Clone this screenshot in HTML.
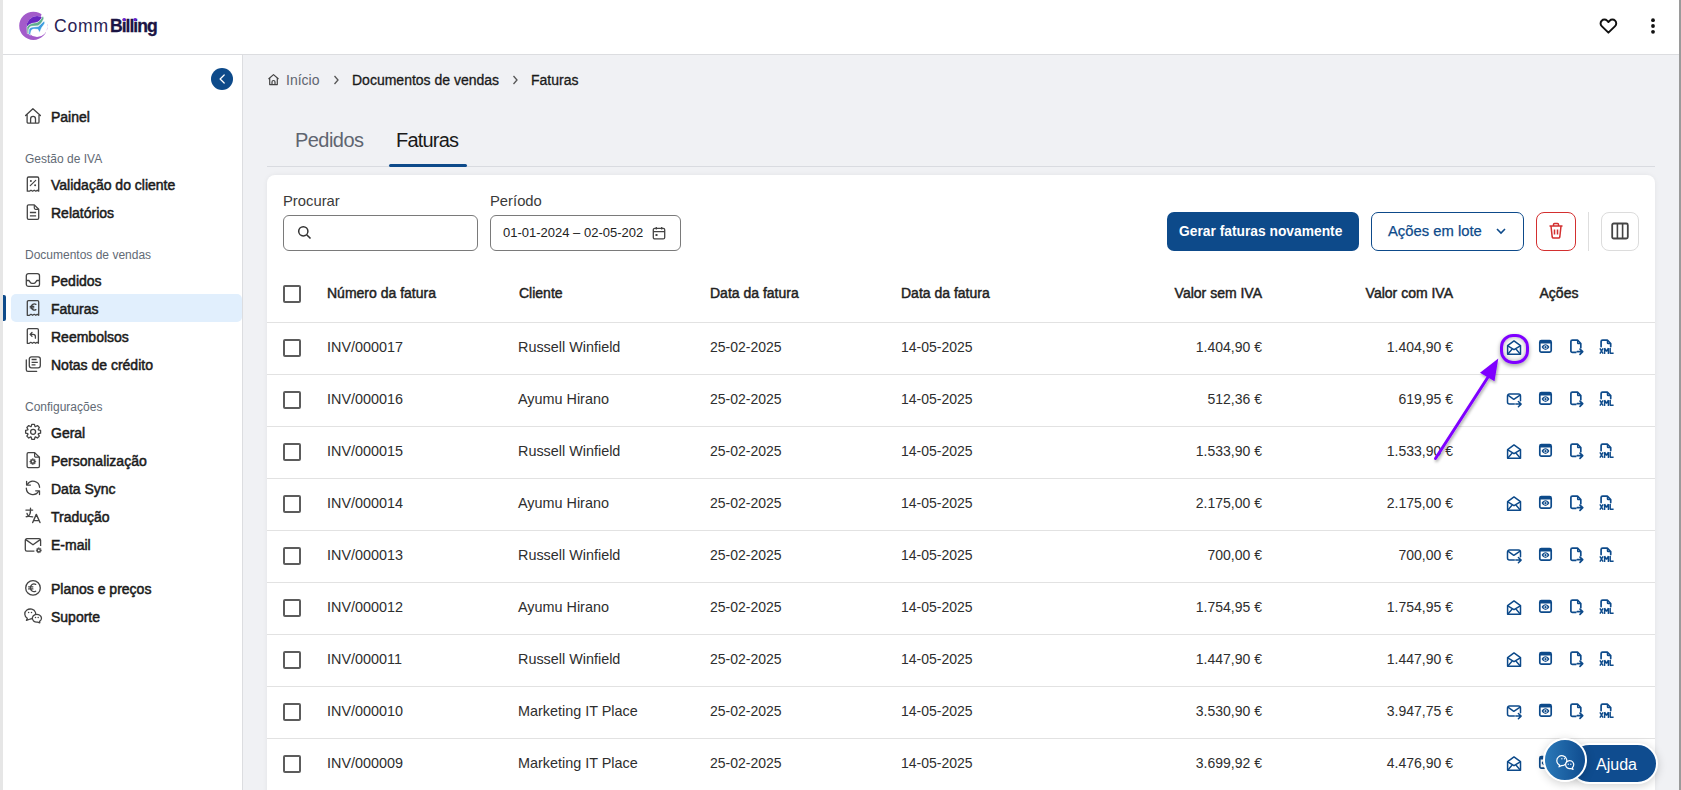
<!DOCTYPE html>
<html><head><meta charset="utf-8">
<style>
*{box-sizing:border-box;margin:0;padding:0}
html,body{width:1681px;height:790px;overflow:hidden;background:#f0f1f4;font-family:"Liberation Sans",sans-serif;color:#1f1f1f;position:relative}
.abs{position:absolute}
svg{overflow:visible}
#lb{position:absolute;left:0;top:0;width:3px;height:790px;background:#e6e6e6}
#rb{position:absolute;left:1679px;top:0;width:2px;height:790px;background:#9a9a9a}
#hdr{position:absolute;left:3px;top:0;width:1676px;height:55px;background:#fff;border-bottom:1px solid #dcdde0}
#side{position:absolute;left:3px;top:55px;width:240px;height:735px;background:#fff;border-right:1px solid #dcdde0}
.t{position:absolute;white-space:nowrap;line-height:20px;height:20px}
.si{left:51px;font-size:14px;font-weight:400;color:#1b1b1b;-webkit-text-stroke:0.5px #1b1b1b}
.sh{left:25px;font-size:12px;color:#626a75}
.card{position:absolute;left:267px;top:175px;width:1388px;height:640px;background:#fff;border-radius:8px;box-shadow:0 0 5px rgba(0,0,0,.06)}
.th{font-size:14px;font-weight:400;color:#222;-webkit-text-stroke:0.45px #222}
.td{font-size:14px;color:#2e2e2e}
.rline{position:absolute;left:267px;width:1388px;height:1px;background:#e2e2e2}
.cb{position:absolute;left:283px;width:18px;height:18px;border:2px solid #5c5c5c;border-radius:2px}
.btn{position:absolute;border-radius:7px}
</style></head><body>
<div id="hdr"></div>
<div id="side"></div>

<svg class="abs" style="left:14px;top:6px" width="40" height="40" viewBox="0 0 790 790">
<defs><clipPath id="inner"><circle cx="455" cy="405" r="206"/></clipPath></defs>
<path fill-rule="evenodd" fill="#a35bca" d="M103,392a280,280 0 1,0 560,0a280,280 0 1,0 -560,0ZM249,405a206,206 0 1,0 412,0a206,206 0 1,0 -412,0Z"/>
<path fill="#fff" d="M530,205 L580,60 L800,60 L800,365 L668,372 Z"/>
<g clip-path="url(#inner)">
<path fill="#6a26c1" d="M230,640 L255,425 C265,395 280,378 300,368 C340,345 390,335 430,330 C490,322 530,270 558,212 L590,100 L200,100 Z"/>
</g>
<path fill="#5fae8e" stroke="#fff" stroke-width="10" d="M560,210 C535,262 490,325 430,330 C390,335 340,345 300,368 C278,380 262,400 255,425 L262,545 L292,548 L294,450 C305,420 325,405 345,400 L470,392 C520,380 560,310 585,258 C595,232 580,198 560,210 Z"/>
<path fill="#3f9ee0" stroke="#fff" stroke-width="10" d="M592,300 L480,405 L352,418 C325,428 305,440 298,460 L292,550 L320,580 L340,482 C360,462 380,456 400,455 L470,460 L505,522 L545,432 L602,352 C612,330 605,300 592,300 Z"/>
</svg>
<div class="t" style="left:54px;top:15px;font-size:17.6px;color:#2a2355;height:22px;line-height:22px;letter-spacing:0.75px">Comm</div>
<div class="t" style="left:110px;top:15px;font-size:17.6px;font-weight:700;color:#1b1444;height:22px;line-height:22px;letter-spacing:-1px;-webkit-text-stroke:0.3px #1b1444">Billing</div>
<svg class="abs" style="left:120px;top:16px" width="20" height="6" viewBox="0 0 20 6" ><circle cx="4.2" cy="3.6" r="1.7" fill="#6a1fd0"/><circle cx="15.1" cy="3.6" r="1.7" fill="#6a1fd0"/></svg>
<svg class="abs" style="left:1599px;top:17px" width="19" height="17" viewBox="0 0 19 17" ><path transform="translate(9.4 9.2) scale(1.08) translate(-9.4 -9.2)" d="M9.4 15.2 3.2 9.1a3.5 3.5 0 0 1 0-5 3.5 3.5 0 0 1 5 0l1.2 1.2 1.2-1.2a3.5 3.5 0 0 1 5 0 3.5 3.5 0 0 1 0 5z" fill="none" stroke="#111" stroke-width="1.8" stroke-linejoin="round"/></svg>
<svg class="abs" style="left:1650px;top:17px" width="6" height="18" viewBox="0 0 6 18" ><circle cx="3" cy="3.2" r="1.9" fill="#111"/><circle cx="3" cy="9" r="1.9" fill="#111"/><circle cx="3" cy="14.8" r="1.9" fill="#111"/></svg>
<div class="abs" style="left:211px;top:68px;width:22px;height:22px;border-radius:50%;background:#0d4a8a"></div>
<svg class="abs" style="left:211px;top:68px" width="22" height="22" viewBox="0 0 22 22" ><path d="M13.2 7 9.1 11l4.1 4" fill="none" stroke="#fff" stroke-width="1.25" stroke-linecap="round" stroke-linejoin="round"/></svg>
<div class="abs" style="left:11px;top:294px;width:231px;height:28px;background:#e1effd;border-radius:5px"></div>
<div class="abs" style="left:3px;top:295px;width:3px;height:26px;background:#0d4a8a;border-radius:0 2px 2px 0"></div>
<div class="t si" style="top:106.5px">Painel</div>
<svg class="abs" style="left:25px;top:108px" width="18" height="17" viewBox="0 0 18 17" ><path d="M0.6 7.6 7.9 0.8 15.4 7.6M2.1 6.3v7.6a1.2 1.2 0 0 0 1.2 1.2h9.5a1.2 1.2 0 0 0 1.2-1.2V6.3M5.6 15.1v-4.2a2.45 2.45 0 0 1 4.9 0v4.2" fill="none" stroke="#444" stroke-width="1.3" stroke-linejoin="round" stroke-linecap="round"/></svg>
<div class="t sh" style="top:149px">Gestão de IVA</div>
<div class="t si" style="top:174.5px">Validação do cliente</div>
<svg class="abs" style="left:25px;top:176px" width="18" height="17" viewBox="0 0 18 17" ><path d="M2.3 15.2V2.3a1.3 1.3 0 0 1 1.3-1.3h8.8a1.3 1.3 0 0 1 1.3 1.3v12.9l-1.4-1-1.5 1-1.6-1-1.6 1-1.6-1-1.5 1z" fill="none" stroke="#444" stroke-width="1.3" stroke-linejoin="round"/><path d="M5.3 9.7 10.7 4.3" stroke="#444" stroke-width="1.2" stroke-linecap="round"/><circle cx="5.9" cy="4.9" r="1" fill="#444"/><circle cx="10.1" cy="9.2" r="1" fill="#444"/></svg>
<div class="t si" style="top:202.5px">Relatórios</div>
<svg class="abs" style="left:25px;top:204px" width="18" height="17" viewBox="0 0 18 17" ><path d="M9.3 0.9H3.6a1.3 1.3 0 0 0-1.3 1.3v11.8a1.3 1.3 0 0 0 1.3 1.3h8.8a1.3 1.3 0 0 0 1.3-1.3V5.3z" fill="none" stroke="#444" stroke-width="1.3" stroke-linejoin="round"/><path d="M9.3 0.9v3.2a1.2 1.2 0 0 0 1.2 1.2h3.2" fill="none" stroke="#444" stroke-width="1.2"/><path d="M4.9 8.5h6.2M4.9 11.8h6.2" fill="none" stroke="#444" stroke-width="1.3"/></svg>
<div class="t sh" style="top:245px">Documentos de vendas</div>
<div class="t si" style="top:270.5px">Pedidos</div>
<svg class="abs" style="left:25px;top:272px" width="18" height="17" viewBox="0 0 18 17" ><rect x="1.3" y="1.6" width="13.2" height="12.8" rx="2.2" fill="none" stroke="#444" stroke-width="1.3"/><path d="M1.3 8.5h2.6l1.4 1.9c.4.6 1 .9 1.7.9h1.8c.7 0 1.3-.3 1.7-.9l1.4-1.9h2.6" fill="none" stroke="#444" stroke-width="1.3" stroke-linejoin="round"/></svg>
<div class="t si" style="top:298.5px">Faturas</div>
<svg class="abs" style="left:25px;top:300px" width="18" height="17" viewBox="0 0 18 17" ><path d="M2.3 15.3V1.9a1.2 1.2 0 0 1 1.2-1.2h9a1.2 1.2 0 0 1 1.2 1.2v13.4l-1.4-1-1.5 1-1.6-1-1.6 1-1.6-1-1.5 1z" fill="none" stroke="#444" stroke-width="1.3" stroke-linejoin="round"/><path d="M10.9 4.4a3 3 0 0 0-4.6 2.6 3 3 0 0 0 4.6 2.6M5.2 6.3h3.6M5.2 7.8h3.6" fill="none" stroke="#444" stroke-width="1.3" stroke-linecap="round"/></svg>
<div class="t si" style="top:326.5px">Reembolsos</div>
<svg class="abs" style="left:25px;top:328px" width="18" height="17" viewBox="0 0 18 17" ><path d="M2.3 15.3V1.9a1.2 1.2 0 0 1 1.2-1.2h8.7a1.2 1.2 0 0 1 1.2 1.2v13.4l-1.3-1-1.5 1-1.6-1-1.6 1-1.6-1-1.5 1z" fill="none" stroke="#444" stroke-width="1.3" stroke-linejoin="round"/><path d="M7 4.5 5.1 6.4 7 8.3M5.3 6.4h2.9a2.2 2.2 0 0 1 2.2 2.2v1.6" fill="none" stroke="#444" stroke-width="1.3" stroke-linejoin="round" stroke-linecap="round"/></svg>
<div class="t si" style="top:354.5px">Notas de crédito</div>
<svg class="abs" style="left:25px;top:356px" width="18" height="17" viewBox="0 0 18 17" ><rect x="4.3" y="0.8" width="11" height="11" rx="2.2" fill="none" stroke="#444" stroke-width="1.3"/><path d="M1.3 4v9.7a1.6 1.6 0 0 0 1.6 1.6h8.8" fill="none" stroke="#444" stroke-width="1.3" stroke-linecap="round"/><path d="M6.6 3.5h5M6.6 6.3h6.2M6.6 8.9h3.9" fill="none" stroke="#444" stroke-width="1.3"/></svg>
<div class="t sh" style="top:397px">Configurações</div>
<div class="t si" style="top:422.5px">Geral</div>
<svg class="abs" style="left:25px;top:424px" width="18" height="17" viewBox="0 0 18 17" ><circle cx="8.1" cy="7.8" r="2.5" fill="none" stroke="#444" stroke-width="1.3"/><path d="M6.76 0.32 L9.44 0.32 L10.04 2.55 L10.44 2.71 L12.45 1.56 L14.34 3.45 L13.19 5.46 L13.35 5.86 L15.58 6.46 L15.58 9.14 L13.35 9.74 L13.19 10.14 L14.34 12.15 L12.45 14.04 L10.44 12.89 L10.04 13.05 L9.44 15.28 L6.76 15.28 L6.16 13.05 L5.76 12.89 L3.75 14.04 L1.86 12.15 L3.01 10.14 L2.85 9.74 L0.62 9.14 L0.62 6.46 L2.85 5.86 L3.01 5.46 L1.86 3.45 L3.75 1.56 L5.76 2.71 L6.16 2.55Z" fill="none" stroke="#444" stroke-width="1.3" stroke-linejoin="round"/></svg>
<div class="t si" style="top:450.5px">Personalização</div>
<svg class="abs" style="left:25px;top:452px" width="18" height="17" viewBox="0 0 18 17" ><path d="M9.6 0.6H3.4a1.3 1.3 0 0 0-1.3 1.3v12.4a1.3 1.3 0 0 0 1.3 1.3h9.7a1.3 1.3 0 0 0 1.3-1.3V5.3z" fill="none" stroke="#444" stroke-width="1.3" stroke-linejoin="round"/><path d="M9.6 0.6v3.4a1.2 1.2 0 0 0 1.2 1.2h3.5" fill="none" stroke="#444" stroke-width="1.2"/><path d="M7.27 6.65 L8.33 6.65 L8.53 7.63 L8.68 7.69 L9.52 7.14 L10.26 7.88 L9.71 8.72 L9.77 8.87 L10.75 9.07 L10.75 10.13 L9.77 10.33 L9.71 10.48 L10.26 11.32 L9.52 12.06 L8.68 11.51 L8.53 11.57 L8.33 12.55 L7.27 12.55 L7.07 11.57 L6.92 11.51 L6.08 12.06 L5.34 11.32 L5.89 10.48 L5.83 10.33 L4.85 10.13 L4.85 9.07 L5.83 8.87 L5.89 8.72 L5.34 7.88 L6.08 7.14 L6.92 7.69 L7.07 7.63Z" fill="#444" stroke="#444" stroke-width=".5" stroke-linejoin="round"/><circle cx="7.8" cy="9.6" r="1" fill="#fff"/></svg>
<div class="t si" style="top:478.5px">Data Sync</div>
<svg class="abs" style="left:25px;top:480px" width="18" height="17" viewBox="0 0 18 17" ><path d="M14.6 7.3A6.6 6.6 0 0 0 2.4 4.3M1.3 8.2a6.6 6.6 0 0 0 12.2 3.3" fill="none" stroke="#444" stroke-width="1.3" stroke-linecap="round"/><path d="M1.6 1.3v3.8h3.8M14.5 14.6v-3.8h-3.8" fill="none" stroke="#444" stroke-width="1.3" stroke-linecap="round" stroke-linejoin="round"/></svg>
<div class="t si" style="top:506.5px">Tradução</div>
<svg class="abs" style="left:25px;top:508px" width="18" height="17" viewBox="0 0 18 17" ><path d="M0.9 2.1h6.8M5.5 0.2v2.2c0 2.8-1 4.9-2.4 5.9-.6.4-1.2.5-1.9.4M2 5.3l.6 1.9M1.2 8.7c2.2-.4 4.3-.3 6.5.1" fill="none" stroke="#444" stroke-width="1.3" stroke-linecap="round" stroke-linejoin="round"/><path d="M7.7 14.5 11.3 6.4 15 14.5M9.2 12.6h4.2" fill="none" stroke="#444" stroke-width="1.4" stroke-linecap="round" stroke-linejoin="round"/></svg>
<div class="t si" style="top:534.5px">E-mail</div>
<svg class="abs" style="left:25px;top:537px" width="18" height="17" viewBox="0 0 18 17" ><path d="M15.6 9V3.3a1.6 1.6 0 0 0-1.6-1.6H1.9A1.6 1.6 0 0 0 .3 3.3v9.3a1.6 1.6 0 0 0 1.6 1.6h7.5" fill="none" stroke="#444" stroke-width="1.3"/><path d="M.8 2.6l7.2 5.2 7.2-5.2" fill="none" stroke="#444" stroke-width="1.3" stroke-linejoin="round"/><path d="M13.34 10.74 L14.26 10.74 L14.42 11.61 L14.55 11.67 L15.29 11.17 L15.93 11.81 L15.43 12.55 L15.49 12.68 L16.36 12.84 L16.36 13.76 L15.49 13.92 L15.43 14.05 L15.93 14.79 L15.29 15.43 L14.55 14.93 L14.42 14.99 L14.26 15.86 L13.34 15.86 L13.18 14.99 L13.05 14.93 L12.31 15.43 L11.67 14.79 L12.17 14.05 L12.11 13.92 L11.24 13.76 L11.24 12.84 L12.11 12.68 L12.17 12.55 L11.67 11.81 L12.31 11.17 L13.05 11.67 L13.18 11.61Z" fill="#444" stroke="#444" stroke-width=".5" stroke-linejoin="round"/><circle cx="13.8" cy="13.3" r=".9" fill="#fff"/></svg>
<div class="t si" style="top:578.5px">Planos e preços</div>
<svg class="abs" style="left:25px;top:580px" width="18" height="17" viewBox="0 0 18 17" ><circle cx="8" cy="7.9" r="7.3" fill="none" stroke="#444" stroke-width="1.3"/><path d="M10.7 4.4a3.6 3.6 0 0 0-5.3 3.4 3.6 3.6 0 0 0 5.3 3.4M3.6 6.8h4.3M3.6 8.9h4.3" fill="none" stroke="#444" stroke-width="1.3" stroke-linecap="round"/></svg>
<div class="t si" style="top:606.5px">Suporte</div>
<svg class="abs" style="left:25px;top:608px" width="18" height="17" viewBox="0 0 18 17" ><path d="M2.3 10.2A5.5 5 0 1 1 5.3 11L1.4 12.4z" fill="none" stroke="#444" stroke-width="1.3" stroke-linejoin="round"/><path d="M14.6 13.4A4.6 3.9 0 1 0 12.6 14.1L14.8 14.9z" fill="#fff" stroke="#444" stroke-width="1.3" stroke-linejoin="round"/><circle cx="3.6" cy="4.6" r=".75" fill="#444"/><circle cx="6.5" cy="4.6" r=".75" fill="#444"/><circle cx="10.5" cy="9.6" r=".75" fill="#444"/><circle cx="13.2" cy="9.6" r=".75" fill="#444"/></svg>
<svg class="abs" style="left:267px;top:73px" width="13" height="13" viewBox="0 0 13 13" ><path d="M1.5 6 6.5 1.6 11.5 6M2.7 5v6.6h7.6V5M5 11.6V9a1.5 1.5 0 0 1 3 0v2.6" fill="none" stroke="#444" stroke-width="1.2" stroke-linejoin="round"/></svg>
<div class="t" style="left:286px;top:70px;font-size:14px;color:#5f6570">Início</div>
<svg class="abs" style="left:332px;top:74px" width="8" height="12" viewBox="0 0 8 12" ><path d="M2.5 2 6 6 2.5 10" fill="none" stroke="#555" stroke-width="1.3"/></svg>
<div class="t" style="left:352px;top:70px;font-size:14px;color:#1a1a1a;-webkit-text-stroke:0.3px #1a1a1a">Documentos de vendas</div>
<svg class="abs" style="left:511px;top:74px" width="8" height="12" viewBox="0 0 8 12" ><path d="M2.5 2 6 6 2.5 10" fill="none" stroke="#555" stroke-width="1.3"/></svg>
<div class="t" style="left:531px;top:70px;font-size:14px;color:#1a1a1a;-webkit-text-stroke:0.3px #1a1a1a">Faturas</div>
<div class="abs" style="left:267px;top:166px;width:1388px;height:1px;background:#d9dbe0"></div>
<div class="abs" style="left:389px;top:164px;width:78px;height:3px;background:#0d4a8a;border-radius:2px"></div>
<div class="t" style="left:295px;top:128px;font-size:20px;letter-spacing:-0.55px;color:#5f6570;height:24px;line-height:24px">Pedidos</div>
<div class="t" style="left:396px;top:128px;font-size:20px;letter-spacing:-0.8px;color:#1a1a1a;height:24px;line-height:24px">Faturas</div>
<div class="card"></div>
<div class="t" style="left:283px;top:191px;font-size:14.8px;color:#3a3a3a">Procurar</div>
<div class="t" style="left:490px;top:191px;font-size:14.8px;color:#3a3a3a">Período</div>
<div class="abs" style="left:283px;top:215px;width:195px;height:36px;border:1px solid #7a7a7a;border-radius:6px"></div>
<svg class="abs" style="left:297px;top:225px" width="15" height="15" viewBox="0 0 15 15" ><circle cx="6.3" cy="6.3" r="4.6" fill="none" stroke="#333" stroke-width="1.5"/><path d="M9.7 9.7 13.5 13.5" stroke="#333" stroke-width="1.6"/></svg>
<div class="abs" style="left:490px;top:215px;width:191px;height:36px;border:1px solid #7a7a7a;border-radius:6px"></div>
<div class="t" style="left:503px;top:223px;font-size:13px;color:#222">01-01-2024 – 02-05-202</div>
<svg class="abs" style="left:652px;top:226px" width="14" height="14" viewBox="0 0 14 14" ><rect x="1.3" y="2.3" width="11.4" height="10.6" rx="1.5" fill="none" stroke="#444" stroke-width="1.3"/><path d="M1.3 5.6h11.4M4.3 1v2.6M9.7 1v2.6" fill="none" stroke="#444" stroke-width="1.3"/><rect x="3.5" y="8" width="2" height="2" fill="#444"/></svg>
<div class="btn" style="left:1167px;top:212px;width:192px;height:39px;background:#0d4a8a"></div>
<div class="t" style="left:1179px;top:222px;font-size:13.8px;font-weight:700;color:#fff">Gerar faturas novamente</div>
<div class="btn" style="left:1371px;top:212px;width:153px;height:39px;border:1px solid #0d4a8a"></div>
<div class="t" style="left:1388px;top:221px;font-size:14.8px;color:#0d4a8a;-webkit-text-stroke:0.25px #0d4a8a">Ações em lote</div>
<svg class="abs" style="left:1494px;top:224px" width="14" height="14" viewBox="0 0 14 14" ><path d="M3 5 7 9 11 5" fill="none" stroke="#0d4a8a" stroke-width="1.6"/></svg>
<div class="btn" style="left:1536px;top:212px;width:40px;height:39px;border:1px solid #d32f2f;border-radius:8px"></div>
<svg class="abs" style="left:1548px;top:222px" width="16" height="18" viewBox="0 0 16 18" ><path d="M1.5 4h13M5.5 4V2.5a1 1 0 0 1 1-1h3a1 1 0 0 1 1 1V4M3 4l1.2 11a1.3 1.3 0 0 0 1.3 1h5a1.3 1.3 0 0 0 1.3-1L13 4M6.5 7.5v5M9.5 7.5v5" fill="none" stroke="#d32f2f" stroke-width="1.5" stroke-linejoin="round"/></svg>
<div class="abs" style="left:1588px;top:212px;width:1px;height:39px;background:#dedede"></div>
<div class="btn" style="left:1601px;top:212px;width:38px;height:39px;border:1px solid #dcdcdc;border-radius:8px"></div>
<svg class="abs" style="left:1611px;top:222px" width="18" height="18" viewBox="0 0 18 18" ><rect x="1.2" y="1.5" width="15.6" height="15" rx="1.5" fill="none" stroke="#444" stroke-width="1.8"/><path d="M6.4 1.5v15M11.6 1.5v15" stroke="#444" stroke-width="1.6"/></svg>
<div class="cb" style="top:285px"></div>
<div class="t th" style="left:327px;top:283px">Número da fatura</div>
<div class="t th" style="left:519px;top:283px">Cliente</div>
<div class="t th" style="left:710px;top:283px">Data da fatura</div>
<div class="t th" style="left:901px;top:283px">Data da fatura</div>
<div class="t th" style="left:962px;width:300px;text-align:right;top:283px">Valor sem IVA</div>
<div class="t th" style="left:1153px;width:300px;text-align:right;top:283px">Valor com IVA</div>
<div class="t th" style="left:1459px;width:200px;text-align:center;top:283px">Ações</div>
<div class="rline" style="top:322px"></div>
<div class="rline" style="top:374px"></div>
<div class="rline" style="top:426px"></div>
<div class="rline" style="top:478px"></div>
<div class="rline" style="top:530px"></div>
<div class="rline" style="top:582px"></div>
<div class="rline" style="top:634px"></div>
<div class="rline" style="top:686px"></div>
<div class="rline" style="top:738px"></div>
<div class="cb" style="top:339px"></div>
<div class="t td" style="left:327px;top:337px;font-size:14.4px">INV/000017</div>
<div class="t td" style="left:518px;top:337px;font-size:14.4px">Russell Winfield</div>
<div class="t td" style="left:710px;top:337px">25-02-2025</div>
<div class="t td" style="left:901px;top:337px">14-05-2025</div>
<div class="t td" style="left:962px;width:300px;text-align:right;top:337px">1.404,90 €</div>
<div class="t td" style="left:1153px;width:300px;text-align:right;top:337px">1.404,90 €</div>
<svg class="abs" style="left:1506px;top:339px" width="16" height="16" viewBox="0 0 16 16" ><path d="M1.6 15.2V6.6L8 1.9l6.5 4.7v8.6z" fill="none" stroke="#0d4a8a" stroke-width="1.5" stroke-linejoin="round"/><path d="M1.8 6.8 8 10.6l6.3-3.8M1.9 15 6.2 10M14.2 15 9.9 10" fill="none" stroke="#0d4a8a" stroke-width="1.4"/></svg>
<svg class="abs" style="left:1539px;top:339px" width="13" height="16" viewBox="0 0 13 16" ><rect x="0.8" y="1.6" width="11.4" height="11.6" rx="1.6" fill="none" stroke="#0d4a8a" stroke-width="1.7"/><path d="M0.8 3.2a1.6 1.6 0 0 1 1.6-1.6h8.2a1.6 1.6 0 0 1 1.6 1.6v1.2H0.8z" fill="#0d4a8a"/><path d="M2.6 8.1c1-1.8 2.4-2.8 3.9-2.8s2.9 1 3.9 2.8c-1 1.8-2.4 2.8-3.9 2.8s-2.9-1-3.9-2.8z" fill="#0d4a8a"/><circle cx="6.5" cy="8.1" r="1.5" fill="none" stroke="#fff" stroke-width=".8"/></svg>
<svg class="abs" style="left:1569px;top:339px" width="15" height="16" viewBox="0 0 15 16" ><path d="M6.7 13.4H3.4a1.5 1.5 0 0 1-1.5-1.5V2.6a1.5 1.5 0 0 1 1.5-1.5h5.1l3.3 3.5v4.1" fill="none" stroke="#0d4a8a" stroke-width="1.7" stroke-linejoin="round" stroke-linecap="round"/><path d="M8.6 1.3v2.6a.8.8 0 0 0 .8.8h2.3" fill="none" stroke="#0d4a8a" stroke-width="1.3"/><path d="M8.2 12.7h5.3M11 10.2l2.7 2.5-2.7 2.6" fill="none" stroke="#0d4a8a" stroke-width="1.7" stroke-linejoin="round" stroke-linecap="round"/></svg>
<svg class="abs" style="left:1599px;top:339px" width="15" height="16" viewBox="0 0 15 16" ><path d="M2.1 7.6V2.6a1.5 1.5 0 0 1 1.5-1.5h4.7l3.4 3.5v3" fill="none" stroke="#0d4a8a" stroke-width="1.7" stroke-linejoin="round" stroke-linecap="round"/><path d="M8.4 1.3v2.6a.8.8 0 0 0 .8.8h2.3" fill="none" stroke="#0d4a8a" stroke-width="1.3"/><path d="M0.9 9.3 4.1 14.6M4.1 9.3 0.9 14.6M5.6 14.9V9.2L7.5 12.4 9.4 9.2V14.9M11.2 9.1V14.2H14.6" fill="none" stroke="#0d4a8a" stroke-width="1.45" stroke-linejoin="bevel" stroke-linecap="butt"/></svg>
<div class="cb" style="top:391px"></div>
<div class="t td" style="left:327px;top:389px;font-size:14.4px">INV/000016</div>
<div class="t td" style="left:518px;top:389px;font-size:14.4px">Ayumu Hirano</div>
<div class="t td" style="left:710px;top:389px">25-02-2025</div>
<div class="t td" style="left:901px;top:389px">14-05-2025</div>
<div class="t td" style="left:962px;width:300px;text-align:right;top:389px">512,36 €</div>
<div class="t td" style="left:1153px;width:300px;text-align:right;top:389px">619,95 €</div>
<svg class="abs" style="left:1506px;top:391px" width="16" height="16" viewBox="0 0 16 16" ><path d="M8.3 13.1H3.5a2 2 0 0 1-2-2V4.9a2 2 0 0 1 2-2h9a2 2 0 0 1 2 2v4.8" fill="none" stroke="#0d4a8a" stroke-width="1.5" stroke-linecap="round"/><path d="M1.9 4.2 7.8 8.3l6.3-4.1" fill="none" stroke="#0d4a8a" stroke-width="1.5" stroke-linejoin="round"/><path d="M9.8 13.1h5M12.4 10.5l2.7 2.6-2.7 2.6" fill="none" stroke="#0d4a8a" stroke-width="1.5" stroke-linejoin="round" stroke-linecap="round"/></svg>
<svg class="abs" style="left:1539px;top:391px" width="13" height="16" viewBox="0 0 13 16" ><rect x="0.8" y="1.6" width="11.4" height="11.6" rx="1.6" fill="none" stroke="#0d4a8a" stroke-width="1.7"/><path d="M0.8 3.2a1.6 1.6 0 0 1 1.6-1.6h8.2a1.6 1.6 0 0 1 1.6 1.6v1.2H0.8z" fill="#0d4a8a"/><path d="M2.6 8.1c1-1.8 2.4-2.8 3.9-2.8s2.9 1 3.9 2.8c-1 1.8-2.4 2.8-3.9 2.8s-2.9-1-3.9-2.8z" fill="#0d4a8a"/><circle cx="6.5" cy="8.1" r="1.5" fill="none" stroke="#fff" stroke-width=".8"/></svg>
<svg class="abs" style="left:1569px;top:391px" width="15" height="16" viewBox="0 0 15 16" ><path d="M6.7 13.4H3.4a1.5 1.5 0 0 1-1.5-1.5V2.6a1.5 1.5 0 0 1 1.5-1.5h5.1l3.3 3.5v4.1" fill="none" stroke="#0d4a8a" stroke-width="1.7" stroke-linejoin="round" stroke-linecap="round"/><path d="M8.6 1.3v2.6a.8.8 0 0 0 .8.8h2.3" fill="none" stroke="#0d4a8a" stroke-width="1.3"/><path d="M8.2 12.7h5.3M11 10.2l2.7 2.5-2.7 2.6" fill="none" stroke="#0d4a8a" stroke-width="1.7" stroke-linejoin="round" stroke-linecap="round"/></svg>
<svg class="abs" style="left:1599px;top:391px" width="15" height="16" viewBox="0 0 15 16" ><path d="M2.1 7.6V2.6a1.5 1.5 0 0 1 1.5-1.5h4.7l3.4 3.5v3" fill="none" stroke="#0d4a8a" stroke-width="1.7" stroke-linejoin="round" stroke-linecap="round"/><path d="M8.4 1.3v2.6a.8.8 0 0 0 .8.8h2.3" fill="none" stroke="#0d4a8a" stroke-width="1.3"/><path d="M0.9 9.3 4.1 14.6M4.1 9.3 0.9 14.6M5.6 14.9V9.2L7.5 12.4 9.4 9.2V14.9M11.2 9.1V14.2H14.6" fill="none" stroke="#0d4a8a" stroke-width="1.45" stroke-linejoin="bevel" stroke-linecap="butt"/></svg>
<div class="cb" style="top:443px"></div>
<div class="t td" style="left:327px;top:441px;font-size:14.4px">INV/000015</div>
<div class="t td" style="left:518px;top:441px;font-size:14.4px">Russell Winfield</div>
<div class="t td" style="left:710px;top:441px">25-02-2025</div>
<div class="t td" style="left:901px;top:441px">14-05-2025</div>
<div class="t td" style="left:962px;width:300px;text-align:right;top:441px">1.533,90 €</div>
<div class="t td" style="left:1153px;width:300px;text-align:right;top:441px">1.533,90 €</div>
<svg class="abs" style="left:1506px;top:443px" width="16" height="16" viewBox="0 0 16 16" ><path d="M1.6 15.2V6.6L8 1.9l6.5 4.7v8.6z" fill="none" stroke="#0d4a8a" stroke-width="1.5" stroke-linejoin="round"/><path d="M1.8 6.8 8 10.6l6.3-3.8M1.9 15 6.2 10M14.2 15 9.9 10" fill="none" stroke="#0d4a8a" stroke-width="1.4"/></svg>
<svg class="abs" style="left:1539px;top:443px" width="13" height="16" viewBox="0 0 13 16" ><rect x="0.8" y="1.6" width="11.4" height="11.6" rx="1.6" fill="none" stroke="#0d4a8a" stroke-width="1.7"/><path d="M0.8 3.2a1.6 1.6 0 0 1 1.6-1.6h8.2a1.6 1.6 0 0 1 1.6 1.6v1.2H0.8z" fill="#0d4a8a"/><path d="M2.6 8.1c1-1.8 2.4-2.8 3.9-2.8s2.9 1 3.9 2.8c-1 1.8-2.4 2.8-3.9 2.8s-2.9-1-3.9-2.8z" fill="#0d4a8a"/><circle cx="6.5" cy="8.1" r="1.5" fill="none" stroke="#fff" stroke-width=".8"/></svg>
<svg class="abs" style="left:1569px;top:443px" width="15" height="16" viewBox="0 0 15 16" ><path d="M6.7 13.4H3.4a1.5 1.5 0 0 1-1.5-1.5V2.6a1.5 1.5 0 0 1 1.5-1.5h5.1l3.3 3.5v4.1" fill="none" stroke="#0d4a8a" stroke-width="1.7" stroke-linejoin="round" stroke-linecap="round"/><path d="M8.6 1.3v2.6a.8.8 0 0 0 .8.8h2.3" fill="none" stroke="#0d4a8a" stroke-width="1.3"/><path d="M8.2 12.7h5.3M11 10.2l2.7 2.5-2.7 2.6" fill="none" stroke="#0d4a8a" stroke-width="1.7" stroke-linejoin="round" stroke-linecap="round"/></svg>
<svg class="abs" style="left:1599px;top:443px" width="15" height="16" viewBox="0 0 15 16" ><path d="M2.1 7.6V2.6a1.5 1.5 0 0 1 1.5-1.5h4.7l3.4 3.5v3" fill="none" stroke="#0d4a8a" stroke-width="1.7" stroke-linejoin="round" stroke-linecap="round"/><path d="M8.4 1.3v2.6a.8.8 0 0 0 .8.8h2.3" fill="none" stroke="#0d4a8a" stroke-width="1.3"/><path d="M0.9 9.3 4.1 14.6M4.1 9.3 0.9 14.6M5.6 14.9V9.2L7.5 12.4 9.4 9.2V14.9M11.2 9.1V14.2H14.6" fill="none" stroke="#0d4a8a" stroke-width="1.45" stroke-linejoin="bevel" stroke-linecap="butt"/></svg>
<div class="cb" style="top:495px"></div>
<div class="t td" style="left:327px;top:493px;font-size:14.4px">INV/000014</div>
<div class="t td" style="left:518px;top:493px;font-size:14.4px">Ayumu Hirano</div>
<div class="t td" style="left:710px;top:493px">25-02-2025</div>
<div class="t td" style="left:901px;top:493px">14-05-2025</div>
<div class="t td" style="left:962px;width:300px;text-align:right;top:493px">2.175,00 €</div>
<div class="t td" style="left:1153px;width:300px;text-align:right;top:493px">2.175,00 €</div>
<svg class="abs" style="left:1506px;top:495px" width="16" height="16" viewBox="0 0 16 16" ><path d="M1.6 15.2V6.6L8 1.9l6.5 4.7v8.6z" fill="none" stroke="#0d4a8a" stroke-width="1.5" stroke-linejoin="round"/><path d="M1.8 6.8 8 10.6l6.3-3.8M1.9 15 6.2 10M14.2 15 9.9 10" fill="none" stroke="#0d4a8a" stroke-width="1.4"/></svg>
<svg class="abs" style="left:1539px;top:495px" width="13" height="16" viewBox="0 0 13 16" ><rect x="0.8" y="1.6" width="11.4" height="11.6" rx="1.6" fill="none" stroke="#0d4a8a" stroke-width="1.7"/><path d="M0.8 3.2a1.6 1.6 0 0 1 1.6-1.6h8.2a1.6 1.6 0 0 1 1.6 1.6v1.2H0.8z" fill="#0d4a8a"/><path d="M2.6 8.1c1-1.8 2.4-2.8 3.9-2.8s2.9 1 3.9 2.8c-1 1.8-2.4 2.8-3.9 2.8s-2.9-1-3.9-2.8z" fill="#0d4a8a"/><circle cx="6.5" cy="8.1" r="1.5" fill="none" stroke="#fff" stroke-width=".8"/></svg>
<svg class="abs" style="left:1569px;top:495px" width="15" height="16" viewBox="0 0 15 16" ><path d="M6.7 13.4H3.4a1.5 1.5 0 0 1-1.5-1.5V2.6a1.5 1.5 0 0 1 1.5-1.5h5.1l3.3 3.5v4.1" fill="none" stroke="#0d4a8a" stroke-width="1.7" stroke-linejoin="round" stroke-linecap="round"/><path d="M8.6 1.3v2.6a.8.8 0 0 0 .8.8h2.3" fill="none" stroke="#0d4a8a" stroke-width="1.3"/><path d="M8.2 12.7h5.3M11 10.2l2.7 2.5-2.7 2.6" fill="none" stroke="#0d4a8a" stroke-width="1.7" stroke-linejoin="round" stroke-linecap="round"/></svg>
<svg class="abs" style="left:1599px;top:495px" width="15" height="16" viewBox="0 0 15 16" ><path d="M2.1 7.6V2.6a1.5 1.5 0 0 1 1.5-1.5h4.7l3.4 3.5v3" fill="none" stroke="#0d4a8a" stroke-width="1.7" stroke-linejoin="round" stroke-linecap="round"/><path d="M8.4 1.3v2.6a.8.8 0 0 0 .8.8h2.3" fill="none" stroke="#0d4a8a" stroke-width="1.3"/><path d="M0.9 9.3 4.1 14.6M4.1 9.3 0.9 14.6M5.6 14.9V9.2L7.5 12.4 9.4 9.2V14.9M11.2 9.1V14.2H14.6" fill="none" stroke="#0d4a8a" stroke-width="1.45" stroke-linejoin="bevel" stroke-linecap="butt"/></svg>
<div class="cb" style="top:547px"></div>
<div class="t td" style="left:327px;top:545px;font-size:14.4px">INV/000013</div>
<div class="t td" style="left:518px;top:545px;font-size:14.4px">Russell Winfield</div>
<div class="t td" style="left:710px;top:545px">25-02-2025</div>
<div class="t td" style="left:901px;top:545px">14-05-2025</div>
<div class="t td" style="left:962px;width:300px;text-align:right;top:545px">700,00 €</div>
<div class="t td" style="left:1153px;width:300px;text-align:right;top:545px">700,00 €</div>
<svg class="abs" style="left:1506px;top:547px" width="16" height="16" viewBox="0 0 16 16" ><path d="M8.3 13.1H3.5a2 2 0 0 1-2-2V4.9a2 2 0 0 1 2-2h9a2 2 0 0 1 2 2v4.8" fill="none" stroke="#0d4a8a" stroke-width="1.5" stroke-linecap="round"/><path d="M1.9 4.2 7.8 8.3l6.3-4.1" fill="none" stroke="#0d4a8a" stroke-width="1.5" stroke-linejoin="round"/><path d="M9.8 13.1h5M12.4 10.5l2.7 2.6-2.7 2.6" fill="none" stroke="#0d4a8a" stroke-width="1.5" stroke-linejoin="round" stroke-linecap="round"/></svg>
<svg class="abs" style="left:1539px;top:547px" width="13" height="16" viewBox="0 0 13 16" ><rect x="0.8" y="1.6" width="11.4" height="11.6" rx="1.6" fill="none" stroke="#0d4a8a" stroke-width="1.7"/><path d="M0.8 3.2a1.6 1.6 0 0 1 1.6-1.6h8.2a1.6 1.6 0 0 1 1.6 1.6v1.2H0.8z" fill="#0d4a8a"/><path d="M2.6 8.1c1-1.8 2.4-2.8 3.9-2.8s2.9 1 3.9 2.8c-1 1.8-2.4 2.8-3.9 2.8s-2.9-1-3.9-2.8z" fill="#0d4a8a"/><circle cx="6.5" cy="8.1" r="1.5" fill="none" stroke="#fff" stroke-width=".8"/></svg>
<svg class="abs" style="left:1569px;top:547px" width="15" height="16" viewBox="0 0 15 16" ><path d="M6.7 13.4H3.4a1.5 1.5 0 0 1-1.5-1.5V2.6a1.5 1.5 0 0 1 1.5-1.5h5.1l3.3 3.5v4.1" fill="none" stroke="#0d4a8a" stroke-width="1.7" stroke-linejoin="round" stroke-linecap="round"/><path d="M8.6 1.3v2.6a.8.8 0 0 0 .8.8h2.3" fill="none" stroke="#0d4a8a" stroke-width="1.3"/><path d="M8.2 12.7h5.3M11 10.2l2.7 2.5-2.7 2.6" fill="none" stroke="#0d4a8a" stroke-width="1.7" stroke-linejoin="round" stroke-linecap="round"/></svg>
<svg class="abs" style="left:1599px;top:547px" width="15" height="16" viewBox="0 0 15 16" ><path d="M2.1 7.6V2.6a1.5 1.5 0 0 1 1.5-1.5h4.7l3.4 3.5v3" fill="none" stroke="#0d4a8a" stroke-width="1.7" stroke-linejoin="round" stroke-linecap="round"/><path d="M8.4 1.3v2.6a.8.8 0 0 0 .8.8h2.3" fill="none" stroke="#0d4a8a" stroke-width="1.3"/><path d="M0.9 9.3 4.1 14.6M4.1 9.3 0.9 14.6M5.6 14.9V9.2L7.5 12.4 9.4 9.2V14.9M11.2 9.1V14.2H14.6" fill="none" stroke="#0d4a8a" stroke-width="1.45" stroke-linejoin="bevel" stroke-linecap="butt"/></svg>
<div class="cb" style="top:599px"></div>
<div class="t td" style="left:327px;top:597px;font-size:14.4px">INV/000012</div>
<div class="t td" style="left:518px;top:597px;font-size:14.4px">Ayumu Hirano</div>
<div class="t td" style="left:710px;top:597px">25-02-2025</div>
<div class="t td" style="left:901px;top:597px">14-05-2025</div>
<div class="t td" style="left:962px;width:300px;text-align:right;top:597px">1.754,95 €</div>
<div class="t td" style="left:1153px;width:300px;text-align:right;top:597px">1.754,95 €</div>
<svg class="abs" style="left:1506px;top:599px" width="16" height="16" viewBox="0 0 16 16" ><path d="M1.6 15.2V6.6L8 1.9l6.5 4.7v8.6z" fill="none" stroke="#0d4a8a" stroke-width="1.5" stroke-linejoin="round"/><path d="M1.8 6.8 8 10.6l6.3-3.8M1.9 15 6.2 10M14.2 15 9.9 10" fill="none" stroke="#0d4a8a" stroke-width="1.4"/></svg>
<svg class="abs" style="left:1539px;top:599px" width="13" height="16" viewBox="0 0 13 16" ><rect x="0.8" y="1.6" width="11.4" height="11.6" rx="1.6" fill="none" stroke="#0d4a8a" stroke-width="1.7"/><path d="M0.8 3.2a1.6 1.6 0 0 1 1.6-1.6h8.2a1.6 1.6 0 0 1 1.6 1.6v1.2H0.8z" fill="#0d4a8a"/><path d="M2.6 8.1c1-1.8 2.4-2.8 3.9-2.8s2.9 1 3.9 2.8c-1 1.8-2.4 2.8-3.9 2.8s-2.9-1-3.9-2.8z" fill="#0d4a8a"/><circle cx="6.5" cy="8.1" r="1.5" fill="none" stroke="#fff" stroke-width=".8"/></svg>
<svg class="abs" style="left:1569px;top:599px" width="15" height="16" viewBox="0 0 15 16" ><path d="M6.7 13.4H3.4a1.5 1.5 0 0 1-1.5-1.5V2.6a1.5 1.5 0 0 1 1.5-1.5h5.1l3.3 3.5v4.1" fill="none" stroke="#0d4a8a" stroke-width="1.7" stroke-linejoin="round" stroke-linecap="round"/><path d="M8.6 1.3v2.6a.8.8 0 0 0 .8.8h2.3" fill="none" stroke="#0d4a8a" stroke-width="1.3"/><path d="M8.2 12.7h5.3M11 10.2l2.7 2.5-2.7 2.6" fill="none" stroke="#0d4a8a" stroke-width="1.7" stroke-linejoin="round" stroke-linecap="round"/></svg>
<svg class="abs" style="left:1599px;top:599px" width="15" height="16" viewBox="0 0 15 16" ><path d="M2.1 7.6V2.6a1.5 1.5 0 0 1 1.5-1.5h4.7l3.4 3.5v3" fill="none" stroke="#0d4a8a" stroke-width="1.7" stroke-linejoin="round" stroke-linecap="round"/><path d="M8.4 1.3v2.6a.8.8 0 0 0 .8.8h2.3" fill="none" stroke="#0d4a8a" stroke-width="1.3"/><path d="M0.9 9.3 4.1 14.6M4.1 9.3 0.9 14.6M5.6 14.9V9.2L7.5 12.4 9.4 9.2V14.9M11.2 9.1V14.2H14.6" fill="none" stroke="#0d4a8a" stroke-width="1.45" stroke-linejoin="bevel" stroke-linecap="butt"/></svg>
<div class="cb" style="top:651px"></div>
<div class="t td" style="left:327px;top:649px;font-size:14.4px">INV/000011</div>
<div class="t td" style="left:518px;top:649px;font-size:14.4px">Russell Winfield</div>
<div class="t td" style="left:710px;top:649px">25-02-2025</div>
<div class="t td" style="left:901px;top:649px">14-05-2025</div>
<div class="t td" style="left:962px;width:300px;text-align:right;top:649px">1.447,90 €</div>
<div class="t td" style="left:1153px;width:300px;text-align:right;top:649px">1.447,90 €</div>
<svg class="abs" style="left:1506px;top:651px" width="16" height="16" viewBox="0 0 16 16" ><path d="M1.6 15.2V6.6L8 1.9l6.5 4.7v8.6z" fill="none" stroke="#0d4a8a" stroke-width="1.5" stroke-linejoin="round"/><path d="M1.8 6.8 8 10.6l6.3-3.8M1.9 15 6.2 10M14.2 15 9.9 10" fill="none" stroke="#0d4a8a" stroke-width="1.4"/></svg>
<svg class="abs" style="left:1539px;top:651px" width="13" height="16" viewBox="0 0 13 16" ><rect x="0.8" y="1.6" width="11.4" height="11.6" rx="1.6" fill="none" stroke="#0d4a8a" stroke-width="1.7"/><path d="M0.8 3.2a1.6 1.6 0 0 1 1.6-1.6h8.2a1.6 1.6 0 0 1 1.6 1.6v1.2H0.8z" fill="#0d4a8a"/><path d="M2.6 8.1c1-1.8 2.4-2.8 3.9-2.8s2.9 1 3.9 2.8c-1 1.8-2.4 2.8-3.9 2.8s-2.9-1-3.9-2.8z" fill="#0d4a8a"/><circle cx="6.5" cy="8.1" r="1.5" fill="none" stroke="#fff" stroke-width=".8"/></svg>
<svg class="abs" style="left:1569px;top:651px" width="15" height="16" viewBox="0 0 15 16" ><path d="M6.7 13.4H3.4a1.5 1.5 0 0 1-1.5-1.5V2.6a1.5 1.5 0 0 1 1.5-1.5h5.1l3.3 3.5v4.1" fill="none" stroke="#0d4a8a" stroke-width="1.7" stroke-linejoin="round" stroke-linecap="round"/><path d="M8.6 1.3v2.6a.8.8 0 0 0 .8.8h2.3" fill="none" stroke="#0d4a8a" stroke-width="1.3"/><path d="M8.2 12.7h5.3M11 10.2l2.7 2.5-2.7 2.6" fill="none" stroke="#0d4a8a" stroke-width="1.7" stroke-linejoin="round" stroke-linecap="round"/></svg>
<svg class="abs" style="left:1599px;top:651px" width="15" height="16" viewBox="0 0 15 16" ><path d="M2.1 7.6V2.6a1.5 1.5 0 0 1 1.5-1.5h4.7l3.4 3.5v3" fill="none" stroke="#0d4a8a" stroke-width="1.7" stroke-linejoin="round" stroke-linecap="round"/><path d="M8.4 1.3v2.6a.8.8 0 0 0 .8.8h2.3" fill="none" stroke="#0d4a8a" stroke-width="1.3"/><path d="M0.9 9.3 4.1 14.6M4.1 9.3 0.9 14.6M5.6 14.9V9.2L7.5 12.4 9.4 9.2V14.9M11.2 9.1V14.2H14.6" fill="none" stroke="#0d4a8a" stroke-width="1.45" stroke-linejoin="bevel" stroke-linecap="butt"/></svg>
<div class="cb" style="top:703px"></div>
<div class="t td" style="left:327px;top:701px;font-size:14.4px">INV/000010</div>
<div class="t td" style="left:518px;top:701px;font-size:14.4px">Marketing IT Place</div>
<div class="t td" style="left:710px;top:701px">25-02-2025</div>
<div class="t td" style="left:901px;top:701px">14-05-2025</div>
<div class="t td" style="left:962px;width:300px;text-align:right;top:701px">3.530,90 €</div>
<div class="t td" style="left:1153px;width:300px;text-align:right;top:701px">3.947,75 €</div>
<svg class="abs" style="left:1506px;top:703px" width="16" height="16" viewBox="0 0 16 16" ><path d="M8.3 13.1H3.5a2 2 0 0 1-2-2V4.9a2 2 0 0 1 2-2h9a2 2 0 0 1 2 2v4.8" fill="none" stroke="#0d4a8a" stroke-width="1.5" stroke-linecap="round"/><path d="M1.9 4.2 7.8 8.3l6.3-4.1" fill="none" stroke="#0d4a8a" stroke-width="1.5" stroke-linejoin="round"/><path d="M9.8 13.1h5M12.4 10.5l2.7 2.6-2.7 2.6" fill="none" stroke="#0d4a8a" stroke-width="1.5" stroke-linejoin="round" stroke-linecap="round"/></svg>
<svg class="abs" style="left:1539px;top:703px" width="13" height="16" viewBox="0 0 13 16" ><rect x="0.8" y="1.6" width="11.4" height="11.6" rx="1.6" fill="none" stroke="#0d4a8a" stroke-width="1.7"/><path d="M0.8 3.2a1.6 1.6 0 0 1 1.6-1.6h8.2a1.6 1.6 0 0 1 1.6 1.6v1.2H0.8z" fill="#0d4a8a"/><path d="M2.6 8.1c1-1.8 2.4-2.8 3.9-2.8s2.9 1 3.9 2.8c-1 1.8-2.4 2.8-3.9 2.8s-2.9-1-3.9-2.8z" fill="#0d4a8a"/><circle cx="6.5" cy="8.1" r="1.5" fill="none" stroke="#fff" stroke-width=".8"/></svg>
<svg class="abs" style="left:1569px;top:703px" width="15" height="16" viewBox="0 0 15 16" ><path d="M6.7 13.4H3.4a1.5 1.5 0 0 1-1.5-1.5V2.6a1.5 1.5 0 0 1 1.5-1.5h5.1l3.3 3.5v4.1" fill="none" stroke="#0d4a8a" stroke-width="1.7" stroke-linejoin="round" stroke-linecap="round"/><path d="M8.6 1.3v2.6a.8.8 0 0 0 .8.8h2.3" fill="none" stroke="#0d4a8a" stroke-width="1.3"/><path d="M8.2 12.7h5.3M11 10.2l2.7 2.5-2.7 2.6" fill="none" stroke="#0d4a8a" stroke-width="1.7" stroke-linejoin="round" stroke-linecap="round"/></svg>
<svg class="abs" style="left:1599px;top:703px" width="15" height="16" viewBox="0 0 15 16" ><path d="M2.1 7.6V2.6a1.5 1.5 0 0 1 1.5-1.5h4.7l3.4 3.5v3" fill="none" stroke="#0d4a8a" stroke-width="1.7" stroke-linejoin="round" stroke-linecap="round"/><path d="M8.4 1.3v2.6a.8.8 0 0 0 .8.8h2.3" fill="none" stroke="#0d4a8a" stroke-width="1.3"/><path d="M0.9 9.3 4.1 14.6M4.1 9.3 0.9 14.6M5.6 14.9V9.2L7.5 12.4 9.4 9.2V14.9M11.2 9.1V14.2H14.6" fill="none" stroke="#0d4a8a" stroke-width="1.45" stroke-linejoin="bevel" stroke-linecap="butt"/></svg>
<div class="cb" style="top:755px"></div>
<div class="t td" style="left:327px;top:753px;font-size:14.4px">INV/000009</div>
<div class="t td" style="left:518px;top:753px;font-size:14.4px">Marketing IT Place</div>
<div class="t td" style="left:710px;top:753px">25-02-2025</div>
<div class="t td" style="left:901px;top:753px">14-05-2025</div>
<div class="t td" style="left:962px;width:300px;text-align:right;top:753px">3.699,92 €</div>
<div class="t td" style="left:1153px;width:300px;text-align:right;top:753px">4.476,90 €</div>
<svg class="abs" style="left:1506px;top:755px" width="16" height="16" viewBox="0 0 16 16" ><path d="M1.6 15.2V6.6L8 1.9l6.5 4.7v8.6z" fill="none" stroke="#0d4a8a" stroke-width="1.5" stroke-linejoin="round"/><path d="M1.8 6.8 8 10.6l6.3-3.8M1.9 15 6.2 10M14.2 15 9.9 10" fill="none" stroke="#0d4a8a" stroke-width="1.4"/></svg>
<svg class="abs" style="left:1539px;top:755px" width="13" height="16" viewBox="0 0 13 16" ><rect x="0.8" y="1.6" width="11.4" height="11.6" rx="1.6" fill="none" stroke="#0d4a8a" stroke-width="1.7"/><path d="M0.8 3.2a1.6 1.6 0 0 1 1.6-1.6h8.2a1.6 1.6 0 0 1 1.6 1.6v1.2H0.8z" fill="#0d4a8a"/><path d="M2.6 8.1c1-1.8 2.4-2.8 3.9-2.8s2.9 1 3.9 2.8c-1 1.8-2.4 2.8-3.9 2.8s-2.9-1-3.9-2.8z" fill="#0d4a8a"/><circle cx="6.5" cy="8.1" r="1.5" fill="none" stroke="#fff" stroke-width=".8"/></svg>
<svg class="abs" style="left:1569px;top:755px" width="15" height="16" viewBox="0 0 15 16" ><path d="M6.7 13.4H3.4a1.5 1.5 0 0 1-1.5-1.5V2.6a1.5 1.5 0 0 1 1.5-1.5h5.1l3.3 3.5v4.1" fill="none" stroke="#0d4a8a" stroke-width="1.7" stroke-linejoin="round" stroke-linecap="round"/><path d="M8.6 1.3v2.6a.8.8 0 0 0 .8.8h2.3" fill="none" stroke="#0d4a8a" stroke-width="1.3"/><path d="M8.2 12.7h5.3M11 10.2l2.7 2.5-2.7 2.6" fill="none" stroke="#0d4a8a" stroke-width="1.7" stroke-linejoin="round" stroke-linecap="round"/></svg>
<svg class="abs" style="left:1599px;top:755px" width="15" height="16" viewBox="0 0 15 16" ><path d="M2.1 7.6V2.6a1.5 1.5 0 0 1 1.5-1.5h4.7l3.4 3.5v3" fill="none" stroke="#0d4a8a" stroke-width="1.7" stroke-linejoin="round" stroke-linecap="round"/><path d="M8.4 1.3v2.6a.8.8 0 0 0 .8.8h2.3" fill="none" stroke="#0d4a8a" stroke-width="1.3"/><path d="M0.9 9.3 4.1 14.6M4.1 9.3 0.9 14.6M5.6 14.9V9.2L7.5 12.4 9.4 9.2V14.9M11.2 9.1V14.2H14.6" fill="none" stroke="#0d4a8a" stroke-width="1.45" stroke-linejoin="bevel" stroke-linecap="butt"/></svg>
<div class="abs" style="left:1500px;top:334px;width:29px;height:30px;border:3px solid #7f00ff;border-radius:13px;box-shadow:0 2px 4px rgba(0,0,0,.35), inset 0 0 5px rgba(0,0,0,.35)"></div>
<svg class="abs" style="left:1420px;top:350px;overflow:visible" width="90" height="120"><defs><filter id="sh" x="-50%" y="-50%" width="200%" height="200%"><feDropShadow dx="1" dy="2" stdDeviation="1.5" flood-color="#000" flood-opacity=".35"/></filter></defs><g filter="url(#sh)"><path d="M15.5 108.5 70 24" stroke="#7f00ff" stroke-width="3" stroke-linecap="round"/><path d="M78.3 8.4 60 22.8 74.5 31.2z" fill="#7f00ff"/></g></svg>
<div class="abs" style="left:1569px;top:743px;width:89px;height:41px;border-radius:21px;background:#0f4c8f;border:2px solid #fff;box-shadow:0 2px 10px rgba(0,0,0,.18)"></div>
<div class="t" style="left:1596px;top:754px;font-size:16px;color:#fff;height:22px;line-height:22px">Ajuda</div>
<div class="abs" style="left:1543px;top:738px;width:44px;height:44px;border-radius:50%;background:linear-gradient(90deg,#2a78b8,#0f4c8f);border:2px solid #fff;box-shadow:0 2px 10px rgba(0,0,0,.18)"></div>
<svg class="abs" style="left:1554px;top:751px" width="24" height="22" viewBox="0 0 24 22" ><g transform="translate(12 11) scale(.86) translate(-12 -11)"><path d="M4.5 14.6 3.9 16.6 6.6 15.2A5.8 5.8 0 1 0 4.5 14.6z" fill="none" stroke="#fff" stroke-width="1.4" stroke-linejoin="round"/><path d="M19.4 17.6 20.2 19.6 17.6 18.6A4.7 4.7 0 1 1 19.4 17.6z" fill="#175aa0" stroke="#fff" stroke-width="1.4" stroke-linejoin="round"/><circle cx="7.2" cy="7.2" r=".75" fill="#fff"/><circle cx="10.3" cy="7.2" r=".75" fill="#fff"/><circle cx="14.6" cy="13.6" r=".75" fill="#fff"/><circle cx="17.6" cy="13.6" r=".75" fill="#fff"/></g></svg>
<div id="lb"></div><div id="rb"></div>
</body></html>
